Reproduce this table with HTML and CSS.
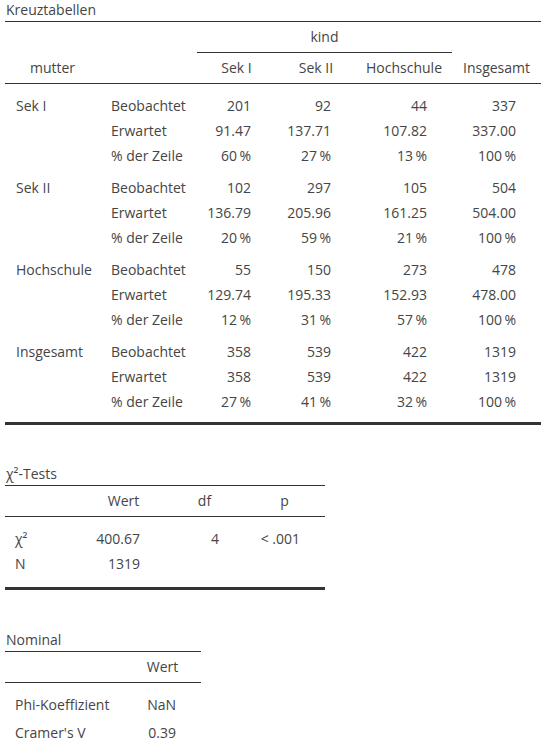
FILE: index.html
```html
<!DOCTYPE html>
<html lang="de">
<head>
<meta charset="utf-8">
<title>Kreuztabellen</title>
<link rel="stylesheet" href="styles.css">
</head>
<body>
<section class="result">
  <div class="title w-main">Kreuztabellen</div>
  <table class="tbl main">
    <colgroup>
      <col class="m1"><col class="m2"><col class="m3"><col class="m4"><col class="m5"><col class="m6">
    </colgroup>
    <thead>
      <tr class="h1">
        <th></th><th></th>
        <th colspan="3" class="span-line">kind</th>
        <th></th>
      </tr>
      <tr class="h2">
        <th>mutter</th><th></th>
        <th>Sek I</th><th>Sek II</th><th>Hochschule</th><th>Insgesamt</th>
      </tr>
    </thead>
    <tbody>
      <tr class="g-first first"><td class="lab">Sek I</td><td class="lab">Beobachtet</td><td class="num">201</td><td class="num">92</td><td class="num">44</td><td class="num">337</td></tr>
      <tr><td></td><td class="lab">Erwartet</td><td class="num">91.47</td><td class="num">137.71</td><td class="num">107.82</td><td class="num">337.00</td></tr>
      <tr><td></td><td class="lab">% der Zeile</td><td class="num">60&thinsp;%</td><td class="num">27&thinsp;%</td><td class="num">13&thinsp;%</td><td class="num">100&thinsp;%</td></tr>

      <tr class="g-first"><td class="lab">Sek II</td><td class="lab">Beobachtet</td><td class="num">102</td><td class="num">297</td><td class="num">105</td><td class="num">504</td></tr>
      <tr><td></td><td class="lab">Erwartet</td><td class="num">136.79</td><td class="num">205.96</td><td class="num">161.25</td><td class="num">504.00</td></tr>
      <tr><td></td><td class="lab">% der Zeile</td><td class="num">20&thinsp;%</td><td class="num">59&thinsp;%</td><td class="num">21&thinsp;%</td><td class="num">100&thinsp;%</td></tr>

      <tr class="g-first"><td class="lab">Hochschule</td><td class="lab">Beobachtet</td><td class="num">55</td><td class="num">150</td><td class="num">273</td><td class="num">478</td></tr>
      <tr><td></td><td class="lab">Erwartet</td><td class="num">129.74</td><td class="num">195.33</td><td class="num">152.93</td><td class="num">478.00</td></tr>
      <tr><td></td><td class="lab">% der Zeile</td><td class="num">12&thinsp;%</td><td class="num">31&thinsp;%</td><td class="num">57&thinsp;%</td><td class="num">100&thinsp;%</td></tr>

      <tr class="g-first"><td class="lab">Insgesamt</td><td class="lab">Beobachtet</td><td class="num">358</td><td class="num">539</td><td class="num">422</td><td class="num">1319</td></tr>
      <tr><td></td><td class="lab">Erwartet</td><td class="num">358</td><td class="num">539</td><td class="num">422</td><td class="num">1319</td></tr>
      <tr class="last"><td></td><td class="lab">% der Zeile</td><td class="num">27&thinsp;%</td><td class="num">41&thinsp;%</td><td class="num">32&thinsp;%</td><td class="num">100&thinsp;%</td></tr>
    </tbody>
  </table>
</section>

<section class="result gap-chi">
  <div class="title w-chi">χ²-Tests</div>
  <table class="tbl chi">
    <colgroup>
      <col class="c1"><col class="c2"><col class="c3"><col class="c4">
    </colgroup>
    <thead>
      <tr class="h2"><th></th><th>Wert</th><th>df</th><th>p</th></tr>
    </thead>
    <tbody>
      <tr class="first"><td class="lab">χ²</td><td class="num">400.67</td><td class="num">4</td><td class="num">&lt; .001</td></tr>
      <tr class="last"><td class="lab">N</td><td class="num">1319</td><td></td><td></td></tr>
    </tbody>
  </table>
</section>

<section class="result gap-nom">
  <div class="title w-nom">Nominal</div>
  <table class="tbl nom">
    <colgroup>
      <col class="n1"><col class="n2">
    </colgroup>
    <thead>
      <tr class="h2"><th></th><th>Wert</th></tr>
    </thead>
    <tbody>
      <tr class="first"><td class="lab">Phi-Koeffizient</td><td class="num">NaN</td></tr>
      <tr class="second"><td class="lab">Cramer's V</td><td class="num">0.39</td></tr>
    </tbody>
  </table>
</section>
</body>
</html>
```

FILE: styles.css
```css
html, body {
  margin: 0;
  padding: 0;
  background: #ffffff;
}

body {
  font-family: "Open Sans", "Noto Sans", "DejaVu Sans", sans-serif;
  font-size: 14px;
  color: #454545;
}

.result {
  padding-left: 5px;
}

.gap-chi {
  margin-top: 39px;
}

.gap-nom {
  margin-top: 40px;
}

.title {
  line-height: 19px;
  padding: 0 0 2px 1px;
  border-bottom: 1px solid #333333;
  white-space: nowrap;
}

.w-main { width: 535px; }
.w-chi  { width: 319px; }
.w-nom  { width: 195px; }

.tbl {
  border-collapse: separate;
  border-spacing: 0;
  table-layout: fixed;
}

.main { width: 536px; }
.chi  { width: 320px; }
.nom  { width: 196px; }

.m1 { width: 95px; }
.m2 { width: 97px; }
.m3 { width: 79px; }
.m4 { width: 80px; }
.m5 { width: 96px; }
.m6 { width: 89px; }

.c1 { width: 77px; }
.c2 { width: 83px; }
.c3 { width: 79px; }
.c4 { width: 81px; }

.n1 { width: 119px; }
.n2 { width: 77px; }

.tbl th {
  font-weight: normal;
  text-align: center;
  line-height: 30px;
  padding: 0;
  white-space: nowrap;
}

.tbl .h1 th {
  border-bottom: 1px solid transparent;
}

.tbl .h1 th.span-line {
  border-bottom-color: #333333;
}

.tbl .h2 th {
  border-bottom: 1px solid #333333;
}

.tbl td {
  line-height: 25px;
  padding: 0;
  white-space: nowrap;
}

.tbl td.lab {
  text-align: left;
  padding-left: 10px;
}

.main td.lab {
  padding-left: 11px;
}

.tbl td.num {
  text-align: right;
  padding-right: 25px;
}

.main .g-first td {
  padding-top: 7px;
}

.main .first td {
  padding-top: 9px;
}

.main .last td {
  padding-bottom: 8px;
  border-bottom: 3px solid #333333;
}

.chi .first td {
  padding-top: 9px;
}

.chi .last td {
  padding-bottom: 11px;
  border-bottom: 3px solid #333333;
}

.nom .first td {
  padding-top: 9px;
}

.nom .second td {
  padding-top: 3px;
}
```
